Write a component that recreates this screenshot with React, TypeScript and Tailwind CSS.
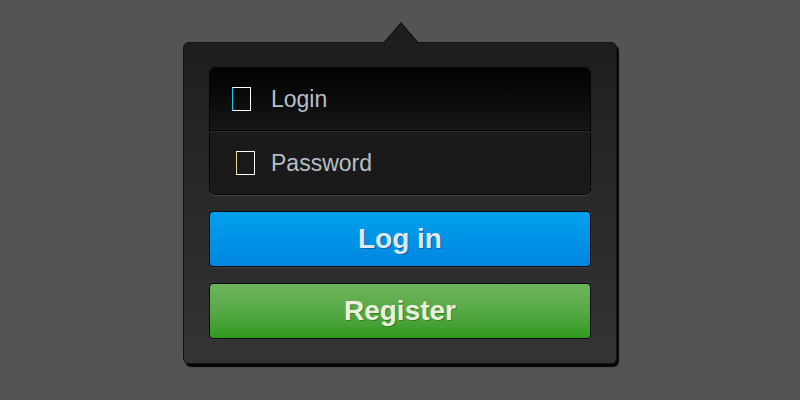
import { ReactNode } from 'react';

function Field({ label, boxClass, top }: { label: string; boxClass: string; top?: boolean }) {
  return (
    <div
      className={cn(
        'flex h-[63px] items-center',
        top ? 'bg-gradient-to-b from-[#030303] to-[#171717] border-b border-[#000]' : 'bg-[#1a1a1a] border-t border-[#2e2e2e]'
      )}
    >
      <span className={cn('block h-[24px] w-[19px] border border-white', boxClass)} />
      <span className="ml-[20px] text-[23px] leading-none text-[#b6bec6] [font-family:'Liberation_Sans',Arial,sans-serif]">
        {label}
      </span>
    </div>
  );
}

function Button({ children, className, textClass }: { children: ReactNode; className: string; textClass: string }) {
  return (
    <button
      className={cn(
        'flex h-[56px] w-full items-center justify-center rounded-[4px] border border-[#0b0b0b] shadow-[0_1px_0_#3c3c3c]',
        className
      )}
    >
      <span className={cn('text-[28px] font-bold leading-none [font-family:\'Liberation_Sans\',Arial,sans-serif]', textClass)}>
        {children}
      </span>
    </button>
  );
}

export default function App() {
  return (
    <div className="flex h-[400px] w-[800px] justify-center bg-[#545454] pt-[42px]">
      <div className="relative h-[322px] w-[434px] rounded-[6px] border border-[#111] bg-gradient-to-b from-[#1e1e1e] to-[#343434] px-[25px] py-[24px] shadow-[2px_3px_1px_#050505]">
        {/* pointer */}
        <div className="absolute left-[199px] top-[-21px] h-0 w-0 border-x-[18px] border-b-[21px] border-x-transparent border-b-[#111]" />
        <div className="absolute left-[200px] top-[-19px] h-0 w-0 border-x-[17px] border-b-[20px] border-x-transparent border-b-[#1e1e1e]" />

        <div className="overflow-hidden rounded-[6px] border border-[#050505] shadow-[0_1px_0_#444]">
          <Field label="Login" boxClass="ml-[22px] border-l-[#1ac8f0]" top />
          <Field label="Password" boxClass="ml-[26px] mr-[-4px] border-l-[#e8d8a0]" />
        </div>

        <div className="mt-[16px] flex flex-col gap-[16px]">
          <Button
            className="bg-gradient-to-b from-[#00a0ec] to-[#0086e2]"
            textClass="text-[#dbe9f5] [text-shadow:1px_1px_0_#0560a5]"
          >
            Log in
          </Button>
          <Button
            className="bg-gradient-to-b from-[#6db55c] via-[#57a947] to-[#2f9a1a]"
            textClass="text-[#e9f1dc] [text-shadow:1px_1px_0_#3b7a22]"
          >
            Register
          </Button>
        </div>
      </div>
    </div>
  );
}

function cn(...classes: (string | boolean | undefined)[]) {
  return classes.filter(Boolean).join(' ');
}
